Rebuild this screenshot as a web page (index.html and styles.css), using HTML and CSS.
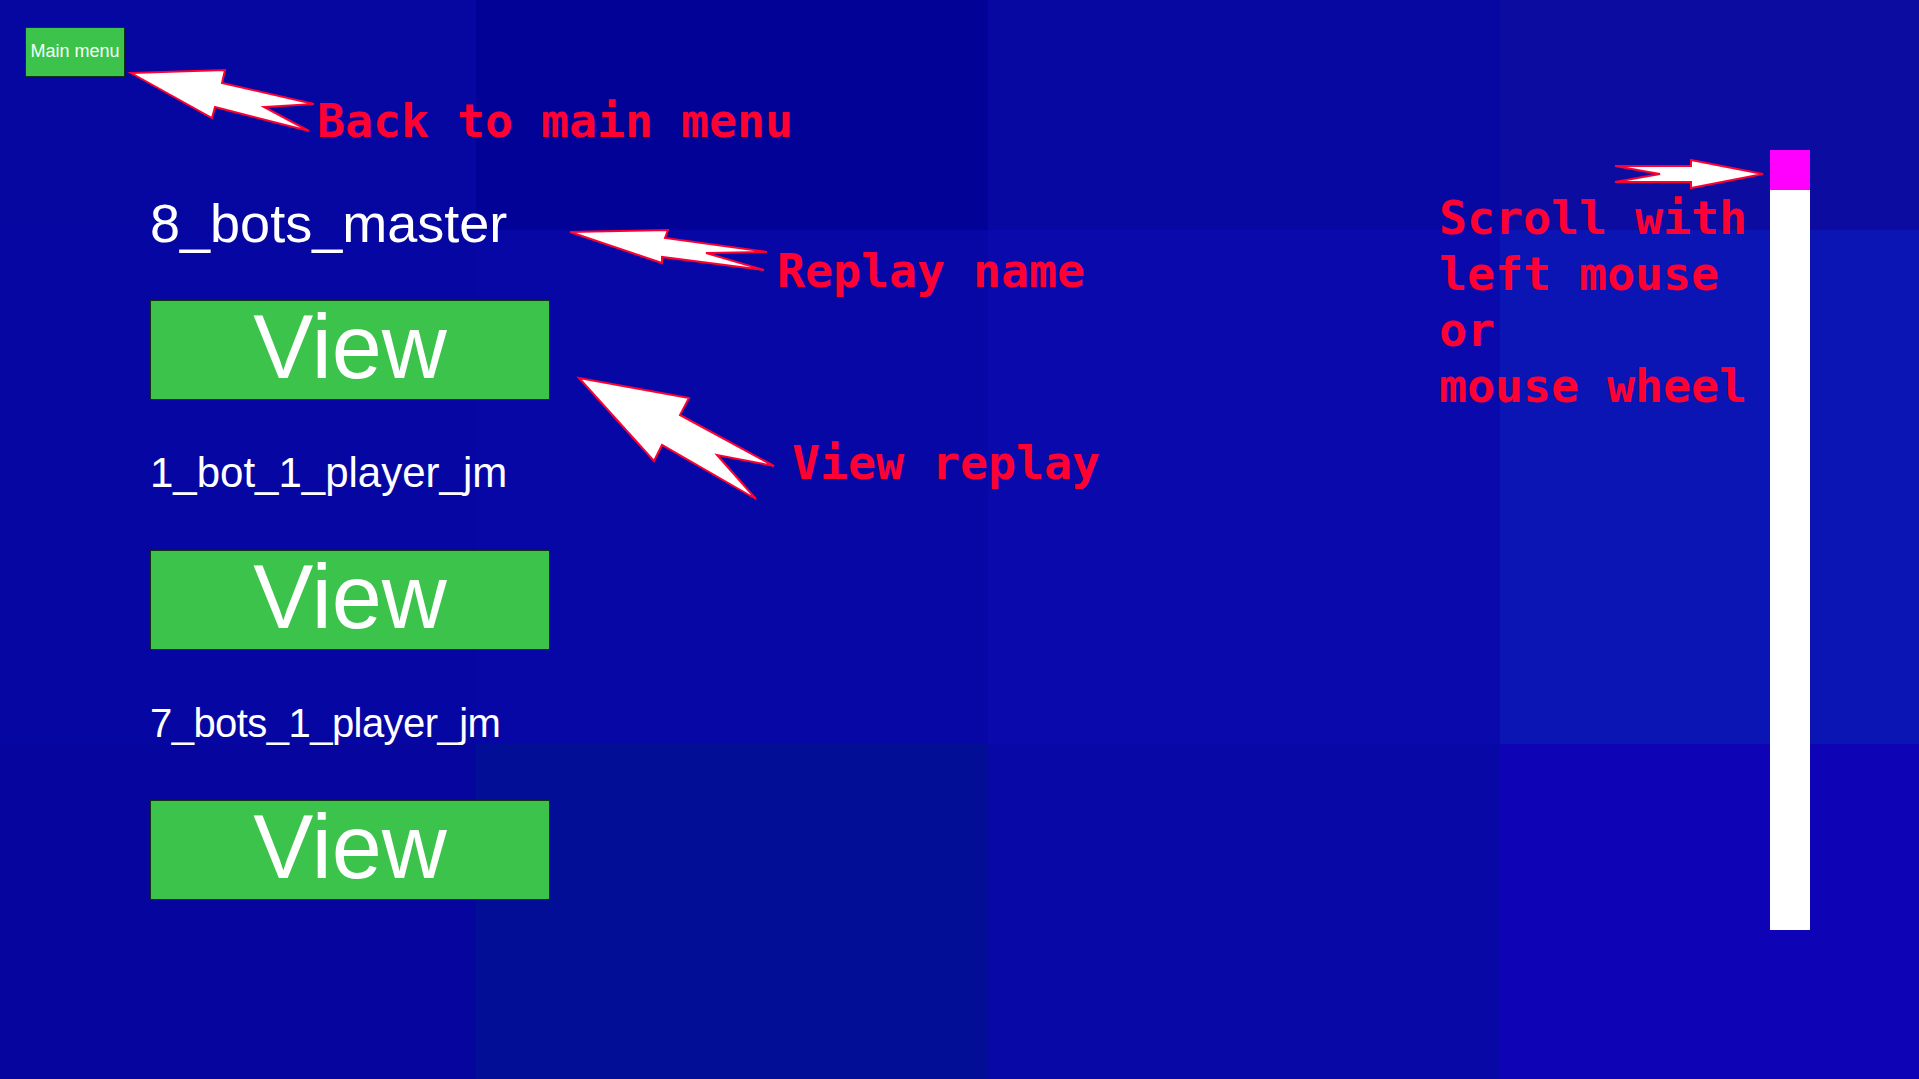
FILE: index.html
```html
<!DOCTYPE html>
<html lang="en">
<head>
<meta charset="utf-8">
<title>Replays</title>
<link rel="stylesheet" href="styles.css">
</head>
<body>
<div class="screen">
  <div class="bg">
    <div class="t r0c0"></div><div class="t r0c1"></div><div class="t r0c2"></div><div class="t r0c3"></div>
    <div class="t r1c0"></div><div class="t r1c1"></div><div class="t r1c2"></div><div class="t r1c3"></div>
    <div class="t r2c0"></div><div class="t r2c1"></div><div class="t r2c2"></div><div class="t r2c3"></div>
  </div>

  <div class="ui">
    <div class="left">
      <div class="menu-btn">Main menu</div>
      <div class="list">
        <div class="item">
          <div class="name"><span class="n1">8_bots_master</span></div>
          <div class="view-btn">View</div>
        </div>
        <div class="item">
          <div class="name"><span class="n2">1_bot_1_player_jm</span></div>
          <div class="view-btn">View</div>
        </div>
        <div class="item">
          <div class="name"><span class="n3">7_bots_1_player_jm</span></div>
          <div class="view-btn">View</div>
        </div>
      </div>
    </div>
    <div class="scrollbar"><div class="thumb"></div></div>
  </div>

  <svg class="arrows" viewBox="0 0 1919 1079" width="1919" height="1079">
    <polygon points="131,73 225,70 222,83 314,104 264,107 309,131 215,107 212,118"/>
    <polygon points="570,232 668,230 665,238 767,252 706,253 764,270 662,257 662,263"/>
    <polygon points="579,378 689,398 680,415 774,466 717,455 756,499 662,445 654,461"/>
    <polygon points="1763,174 1691,160 1691,166 1615,166 1660,174 1615,182 1691,182 1691,188"/>
  </svg>

  <div class="note note-back">Back to main menu</div>
  <div class="note note-name">Replay name</div>
  <div class="note note-view">View replay</div>
  <div class="note note-scroll">Scroll with<br>left mouse<br>or<br>mouse wheel</div>
</div>
</body>
</html>
```

FILE: styles.css
```css
html, body {
  margin: 0;
  padding: 0;
  background: #0606a0;
  overflow: hidden;
}

.screen {
  position: relative;
  width: 1919px;
  height: 1079px;
  overflow: hidden;
  font-family: "Liberation Sans", Arial, sans-serif;
}

.bg {
  position: absolute;
  inset: 0;
  display: grid;
  grid-template-columns: 476px 512px 512px 1fr;
  grid-template-rows: 230px 514px 1fr;
}

.r0c0 { background: #0606a1; }
.r0c1 { background: #020297; }
.r0c2 { background: #0707a1; }
.r0c3 { background: #0c0ca0; }
.r1c0 { background: #0606a2; }
.r1c1 { background: #0707a6; }
.r1c2 { background: #0909ac; }
.r1c3 { background: #0a15b4; }
.r2c0 { background: #06069f; }
.r2c1 { background: #030e96; }
.r2c2 { background: #0808a7; }
.r2c3 { background: #0e03b5; }

.ui {
  position: relative;
  display: flex;
  height: 100%;
}

.left {
  display: flex;
  flex-direction: column;
  padding-left: 25px;
  padding-top: 27px;
}

.menu-btn {
  box-sizing: border-box;
  width: 100px;
  height: 50px;
  background: #3cc34b;
  border: 1px solid #143214;
  color: #f4fff4;
  font-size: 18px;
  line-height: 1;
  display: flex;
  align-items: center;
  justify-content: center;
  padding-bottom: 3px;
}

.list {
  display: flex;
  flex-direction: column;
  margin-left: 125px;
  margin-top: 73px;
}

.item {
  display: flex;
  flex-direction: column;
}

.name {
  box-sizing: border-box;
  height: 150px;
  display: flex;
  align-items: center;
  padding-bottom: 4px;
  color: #ffffff;
  line-height: 1;
  white-space: nowrap;
}

.n1 { font-size: 54px; }
.n2 { font-size: 42px; }
.n3 { font-size: 40px; letter-spacing: -0.55px; }

.view-btn {
  box-sizing: border-box;
  width: 400px;
  height: 100px;
  background: #3cc34b;
  border: 1px solid #123012;
  color: #ffffff;
  font-size: 90px;
  line-height: 1;
  display: flex;
  align-items: center;
  justify-content: center;
  padding-bottom: 6px;
}

.scrollbar {
  margin-left: auto;
  margin-right: 109px;
  margin-top: 150px;
  width: 40px;
  height: 780px;
  background: #ffffff;
}

.thumb {
  width: 40px;
  height: 40px;
  background: #ff00ff;
}

.arrows {
  position: absolute;
  left: 0;
  top: 0;
  pointer-events: none;
}

.arrows polygon {
  fill: #ffffff;
  stroke: #ff0033;
  stroke-width: 2;
  stroke-linejoin: miter;
}

.note {
  position: absolute;
  font-family: "DejaVu Sans Mono", "Liberation Mono", monospace;
  font-weight: bold;
  font-size: 46.5px;
  line-height: 56px;
  color: #ff0033;
  white-space: nowrap;
}

.note-back { left: 317px; top: 93px; }
.note-name { left: 777px; top: 243px; }
.note-view { left: 792px; top: 435px; }
.note-scroll { left: 1439px; top: 190px; }
```
